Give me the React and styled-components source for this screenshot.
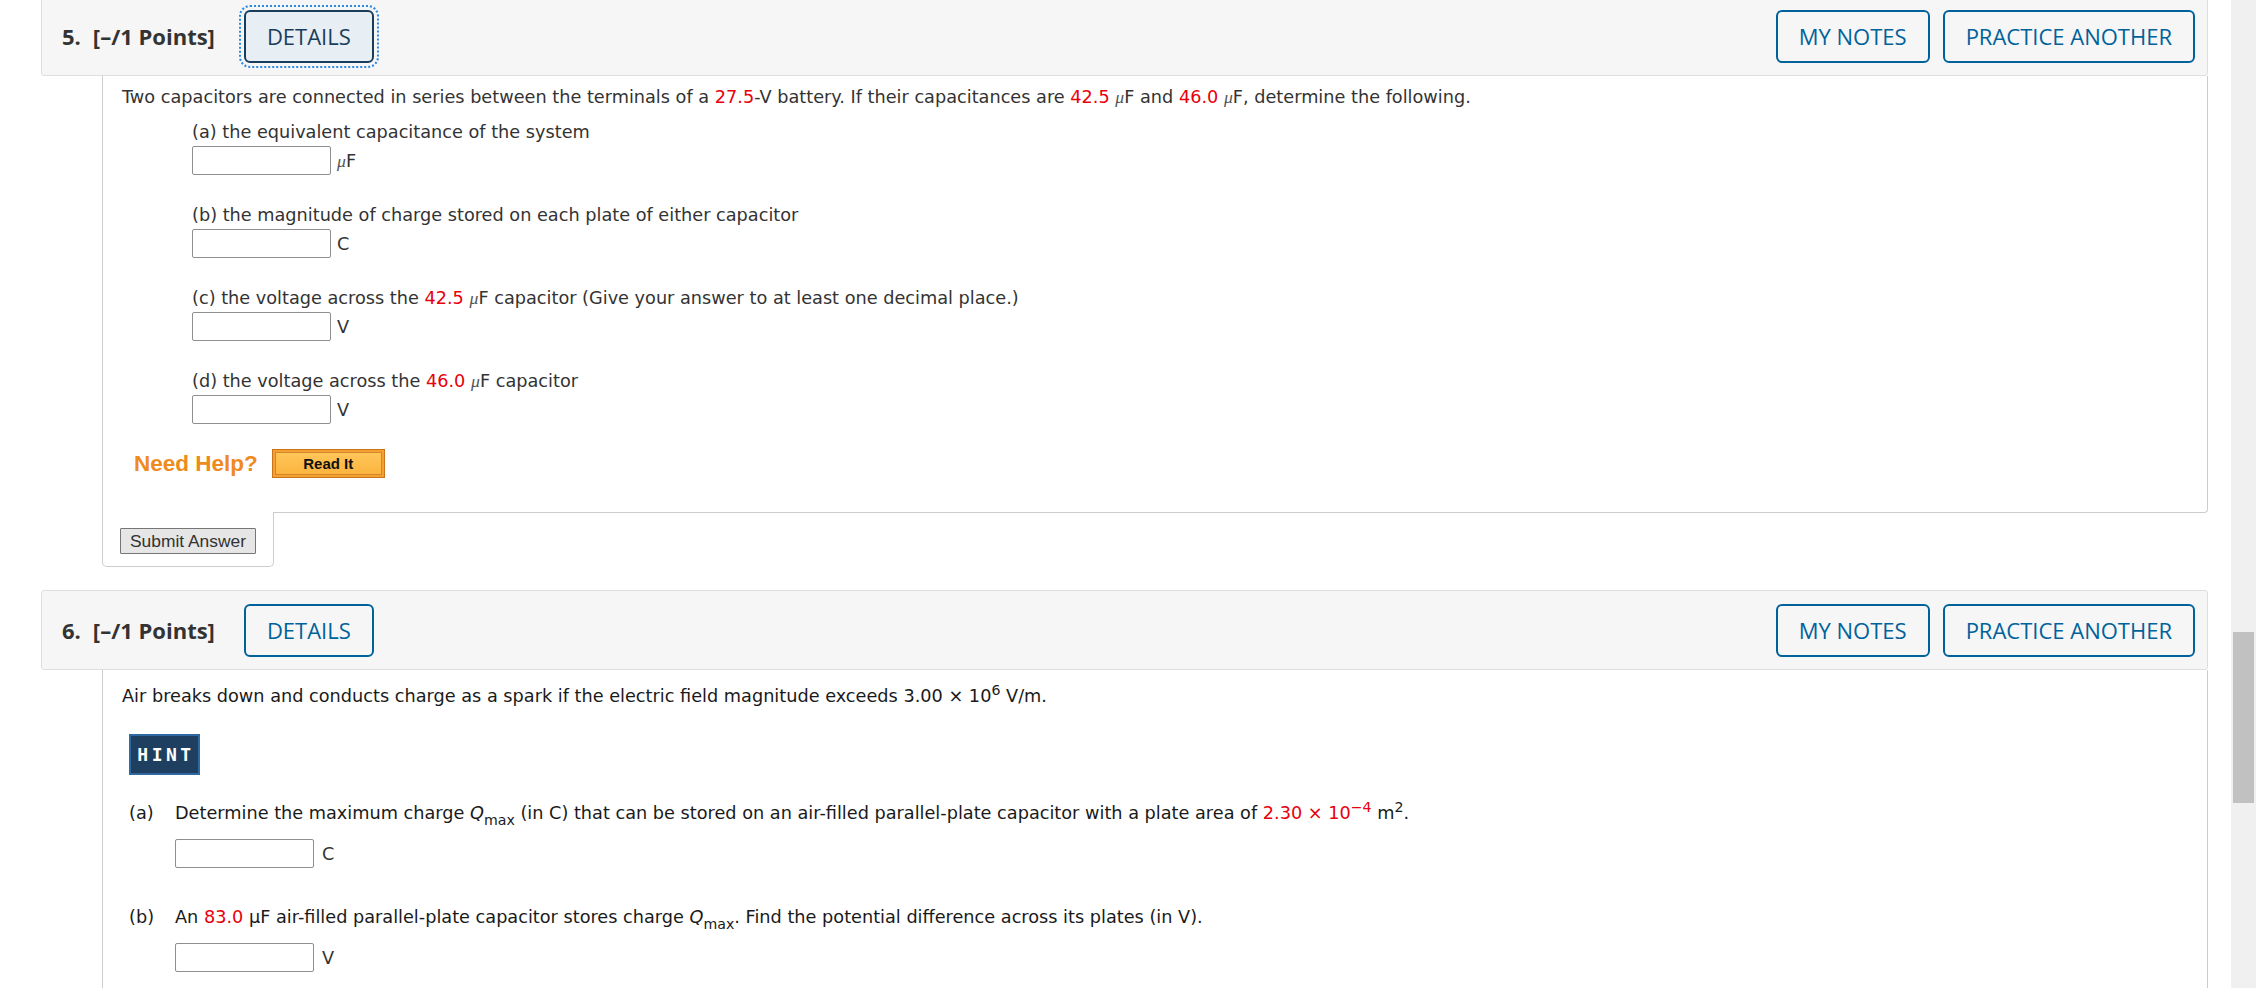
import React from "react";
import styled, { createGlobalStyle } from "styled-components";

const GlobalStyle = createGlobalStyle`
  html, body {
    margin: 0;
    padding: 0;
    background: #ffffff;
    overflow: hidden;
  }
  * {
    box-sizing: border-box;
  }
`;

const Page = styled.div`
  display: flex;
  height: 100vh;
  overflow: hidden;
`;

const Content = styled.main`
  flex: 1;
  margin-top: -4px;
  padding: 0 23px 0 41px;
`;

const ScrollTrack = styled.div`
  width: 25px;
  flex-shrink: 0;
  height: 100vh;
  background: #f0f0f0;
  padding: 632px 2px 0 2px;
`;

const ScrollThumb = styled.div`
  height: 171px;
  background: #c1c1c1;
`;

const Question = styled.section`
  margin-bottom: 23px;
`;

const Header = styled.header`
  display: flex;
  align-items: center;
  height: 80px;
  padding: 0 12px 0 20px;
  background: #f6f6f6;
  border: 1px solid #dedede;
  border-radius: 3px;
`;

const Title = styled.h2`
  margin: 0 29px 0 0;
  font-family: "Open Sans", "DejaVu Sans", sans-serif;
  font-weight: 700;
  font-size: 22px;
  color: #333333;
  white-space: nowrap;
`;

const Number = styled.span`
  margin-right: 12px;
`;

const HeaderActions = styled.div`
  display: flex;
  gap: 13px;
  margin-left: auto;
`;

const OutlineButton = styled.button`
  height: 53px;
  padding: 0 21px;
  font-family: "Open Sans", "DejaVu Sans", sans-serif;
  font-size: 22px;
  font-weight: 400;
  color: ${(p) => (p.$focused ? "#1b3d5c" : "#00629b")};
  background: ${(p) => (p.$focused ? "#e7eef4" : "transparent")};
  border: 2px solid ${(p) => (p.$focused ? "#1b3d5c" : "#00629b")};
  border-radius: 6px;
  outline: ${(p) => (p.$focused ? "2px dotted #2b8ae2" : "none")};
  outline-offset: 3px;
  cursor: pointer;
`;

const Body = styled.div`
  margin-left: 61px;
  border: 1px solid #cccccc;
  border-top: none;
  border-bottom-right-radius: 4px;
  padding: ${(p) => p.$pad};
  font-family: "DejaVu Sans", Verdana, sans-serif;
  font-size: 17.7px;
  line-height: 20px;
  color: ${(p) => p.$color || "#333333"};
`;

const OpenBody = styled(Body)`
  border-bottom: none;
  min-height: 400px;
`;

const Sentence = styled.p`
  margin: 0;
  white-space: nowrap;
`;

const Red = styled.span`
  color: #e8000b;
`;

const Mu = styled.span`
  font-family: "Liberation Serif", "DejaVu Serif", serif;
  font-style: italic;
  color: #555555;
`;

const Sup = styled.sup`
  font-size: 0.8em;
  line-height: 0;
  vertical-align: 0.5em;
`;

const Sub = styled.sub`
  font-size: 0.8em;
  line-height: 0;
  vertical-align: -0.45em;
`;

const Q = styled.i`
  font-family: "DejaVu Sans", sans-serif;
`;

const Parts = styled.div`
  margin: 15px 0 0 70px;
`;

const Part = styled.div`
  margin-bottom: 30px;
`;

const PartLabel = styled.div`
  white-space: nowrap;
`;

const AnswerRow = styled.div`
  display: flex;
  align-items: center;
  gap: ${(p) => p.$gap || 6}px;
  margin-top: ${(p) => p.$top || 4}px;
`;

const AnswerInput = styled.input`
  width: 139px;
  height: 29px;
  border: 1px solid #8f8f8f;
  border-radius: 2px;
  background: #ffffff;
  padding: 0 4px;
`;

const Unit = styled.span`
  color: #333333;
`;

const HelpRow = styled.div`
  display: flex;
  align-items: center;
  gap: 14px;
  margin: -5px 0 0 12px;
`;

const NeedHelp = styled.span`
  font-family: "Liberation Sans", Arial, sans-serif;
  font-weight: 700;
  font-size: 22.5px;
  color: #ef8a1c;
`;

const ReadIt = styled.button`
  width: 113px;
  height: 29px;
  padding: 2px;
  background: #f5a131;
  border: 1px solid #c9731c;
  cursor: pointer;
`;

const ReadItFace = styled.span`
  display: flex;
  align-items: center;
  justify-content: center;
  height: 100%;
  border: 1px solid #d4862a;
  background: linear-gradient(#ffc659, #fbb43f);
  font-family: "Liberation Sans", Arial, sans-serif;
  font-weight: 700;
  font-size: 15px;
  color: #111111;
`;

const SubmitTab = styled.div`
  width: 172px;
  height: 55px;
  margin: -1px 0 0 61px;
  padding: 16px 0 0 17px;
  background: #ffffff;
  border: 1px solid #cccccc;
  border-top: none;
  border-radius: 0 0 5px 5px;
`;

const SubmitButton = styled.button`
  height: 26px;
  padding: 0 9px;
  font-family: "Liberation Sans", Arial, sans-serif;
  font-size: 17.4px;
  color: #333333;
  background: #e6e6e6;
  border: 1px solid #767676;
  border-radius: 1px;
  cursor: pointer;
`;

const Inner = styled.div`
  margin-left: 7px;
`;

const Hint = styled.div`
  display: inline-flex;
  align-items: center;
  justify-content: center;
  width: 71px;
  height: 41px;
  margin-top: 28px;
  background: #1f3f60;
  border: 2px solid #2e6aa1;
  font-family: "DejaVu Sans Mono", monospace;
  font-weight: 700;
  font-size: 18px;
  letter-spacing: 3.5px;
  padding-left: 3px;
  color: #ffffff;
`;

const HangingPart = styled.div`
  display: grid;
  grid-template-columns: 46px auto;
  margin-top: ${(p) => p.$top}px;
`;

const Tag = styled.span``;

const Header5 = () => (
  <Header>
    <Title>
      <Number>5.</Number>[–/1 Points]
    </Title>
    <OutlineButton $focused>DETAILS</OutlineButton>
    <HeaderActions>
      <OutlineButton>MY NOTES</OutlineButton>
      <OutlineButton>PRACTICE ANOTHER</OutlineButton>
    </HeaderActions>
  </Header>
);

const Header6 = () => (
  <Header>
    <Title>
      <Number>6.</Number>[–/1 Points]
    </Title>
    <OutlineButton>DETAILS</OutlineButton>
    <HeaderActions>
      <OutlineButton>MY NOTES</OutlineButton>
      <OutlineButton>PRACTICE ANOTHER</OutlineButton>
    </HeaderActions>
  </Header>
);

const parts5 = [
  { label: <>(a) the equivalent capacitance of the system</>, unit: <><Mu>μ</Mu>F</> },
  { label: <>(b) the magnitude of charge stored on each plate of either capacitor</>, unit: "C" },
  {
    label: (
      <>
        (c) the voltage across the <Red>42.5</Red> <Mu>μ</Mu>F capacitor (Give your answer to at
        least one decimal place.)
      </>
    ),
    unit: "V",
  },
  {
    label: (
      <>
        (d) the voltage across the <Red>46.0</Red> <Mu>μ</Mu>F capacitor
      </>
    ),
    unit: "V",
  },
];

export default function App() {
  return (
    <Page>
      <GlobalStyle />
      <Content>
        <Question>
          <Header5 />
          <Body $pad="11px 20px 34px 19px">
            <Sentence>
              Two capacitors are connected in series between the terminals of a <Red>27.5</Red>-V
              battery. If their capacitances are <Red>42.5</Red> <Mu>μ</Mu>F and <Red>46.0</Red>{" "}
              <Mu>μ</Mu>F, determine the following.
            </Sentence>
            <Parts>
              {parts5.map((p, i) => (
                <Part key={i}>
                  <PartLabel>{p.label}</PartLabel>
                  <AnswerRow>
                    <AnswerInput type="text" />
                    <Unit>{p.unit}</Unit>
                  </AnswerRow>
                </Part>
              ))}
            </Parts>
            <HelpRow>
              <NeedHelp>Need Help?</NeedHelp>
              <ReadIt>
                <ReadItFace>Read It</ReadItFace>
              </ReadIt>
            </HelpRow>
          </Body>
          <SubmitTab>
            <SubmitButton>Submit Answer</SubmitButton>
          </SubmitTab>
        </Question>

        <Question>
          <Header6 />
          <OpenBody $pad="16px 20px 0 19px" $color="#1a1a1a">
            <Sentence>
              Air breaks down and conducts charge as a spark if the electric field magnitude exceeds
              3.00 × 10<Sup>6</Sup> V/m.
            </Sentence>
            <Inner>
              <Hint>HINT</Hint>
              <HangingPart $top={28}>
                <Tag>(a)</Tag>
                <div>
                  <PartLabel>
                    Determine the maximum charge <Q>Q</Q>
                    <Sub>max</Sub> (in C) that can be stored on an air-filled parallel-plate
                    capacitor with a plate area of{" "}
                    <Red>
                      2.30 × 10<Sup>−4</Sup>
                    </Red>{" "}
                    m<Sup>2</Sup>.
                  </PartLabel>
                  <AnswerRow $top={16} $gap={8}>
                    <AnswerInput type="text" />
                    <Unit>C</Unit>
                  </AnswerRow>
                </div>
              </HangingPart>
              <HangingPart $top={39}>
                <Tag>(b)</Tag>
                <div>
                  <PartLabel>
                    An <Red>83.0</Red> μF air-filled parallel-plate capacitor stores charge{" "}
                    <Q>Q</Q>
                    <Sub>max</Sub>. Find the potential difference across its plates (in V).
                  </PartLabel>
                  <AnswerRow $top={16} $gap={8}>
                    <AnswerInput type="text" />
                    <Unit>V</Unit>
                  </AnswerRow>
                </div>
              </HangingPart>
            </Inner>
          </OpenBody>
        </Question>
      </Content>
      <ScrollTrack>
        <ScrollThumb />
      </ScrollTrack>
    </Page>
  );
}
